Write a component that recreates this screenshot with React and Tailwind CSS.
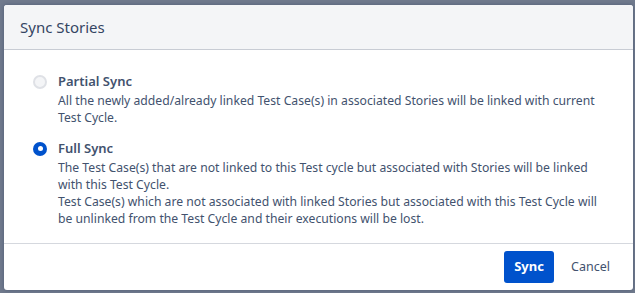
import React from "react";

function Radio({ checked }) {
  return checked ? (
    <span className="flex h-[14px] w-[14px] shrink-0 items-center justify-center rounded-full bg-[#0052cc]">
      <span className="h-[5px] w-[5px] rounded-full bg-white" />
    </span>
  ) : (
    <span className="h-[14px] w-[14px] shrink-0 rounded-full border-2 border-[#dfe1e6] bg-[#f4f5f7]" />
  );
}

function Option({ checked, label, children, className = "" }) {
  return (
    <div className={"flex gap-[11px] " + className}>
      <div className="flex h-[17px] items-center">
        <Radio checked={checked} />
      </div>
      <div>
        <div className="text-[13px] font-semibold leading-[17px] text-[#42526e]">{label}</div>
        <div className="mt-[2px] text-[12.2px] leading-[17px] text-[#42526e]">{children}</div>
      </div>
    </div>
  );
}

export default function App() {
  return (
    <div
      className="h-[293px] w-[635px] overflow-hidden bg-[#707a8d] pl-[4px] pt-[5px]"
      style={{ fontFamily: '"Noto Sans", "Open Sans", sans-serif' }}
    >
      <div className="flex h-[285px] w-[629px] flex-col overflow-hidden rounded-[3px] bg-white shadow-[0_0_4px_rgba(9,30,66,0.3)]">
        <div className="flex h-[45px] shrink-0 items-center border-b border-[#c8ccd4] bg-[#f4f5f7] pl-[16px]">
          <span className="text-[15px] text-[#344563]">Sync Stories</span>
        </div>
        <div className="pb-[16px] pl-[29px] pr-[20px] pt-[23px]">
          <Option checked={false} label="Partial Sync">
            All the newly added/already linked Test Case(s) in associated Stories will be linked with current
            <br />
            Test Cycle.
          </Option>
          <Option checked={true} label="Full Sync" className="mt-[14px]">
            The Test Case(s) that are not linked to this Test cycle but associated with Stories will be linked
            <br />
            with this Test Cycle.
            <br />
            Test Case(s) which are not associated with linked Stories but associated with this Test Cycle will
            <br />
            be unlinked from the Test Cycle and their executions will be lost.
          </Option>
        </div>
        <div className="flex flex-1 items-start justify-end gap-[6px] border-t border-[#d5d8de] pr-[12px] pt-[7px]">
          <button className="h-[32px] w-[50px] rounded-[3px] bg-[#0052cc] text-[13px] font-bold text-white">
            Sync
          </button>
          <button className="h-[32px] px-[11px] text-[12.5px] text-[#42526e]">Cancel</button>
        </div>
      </div>
    </div>
  );
}
